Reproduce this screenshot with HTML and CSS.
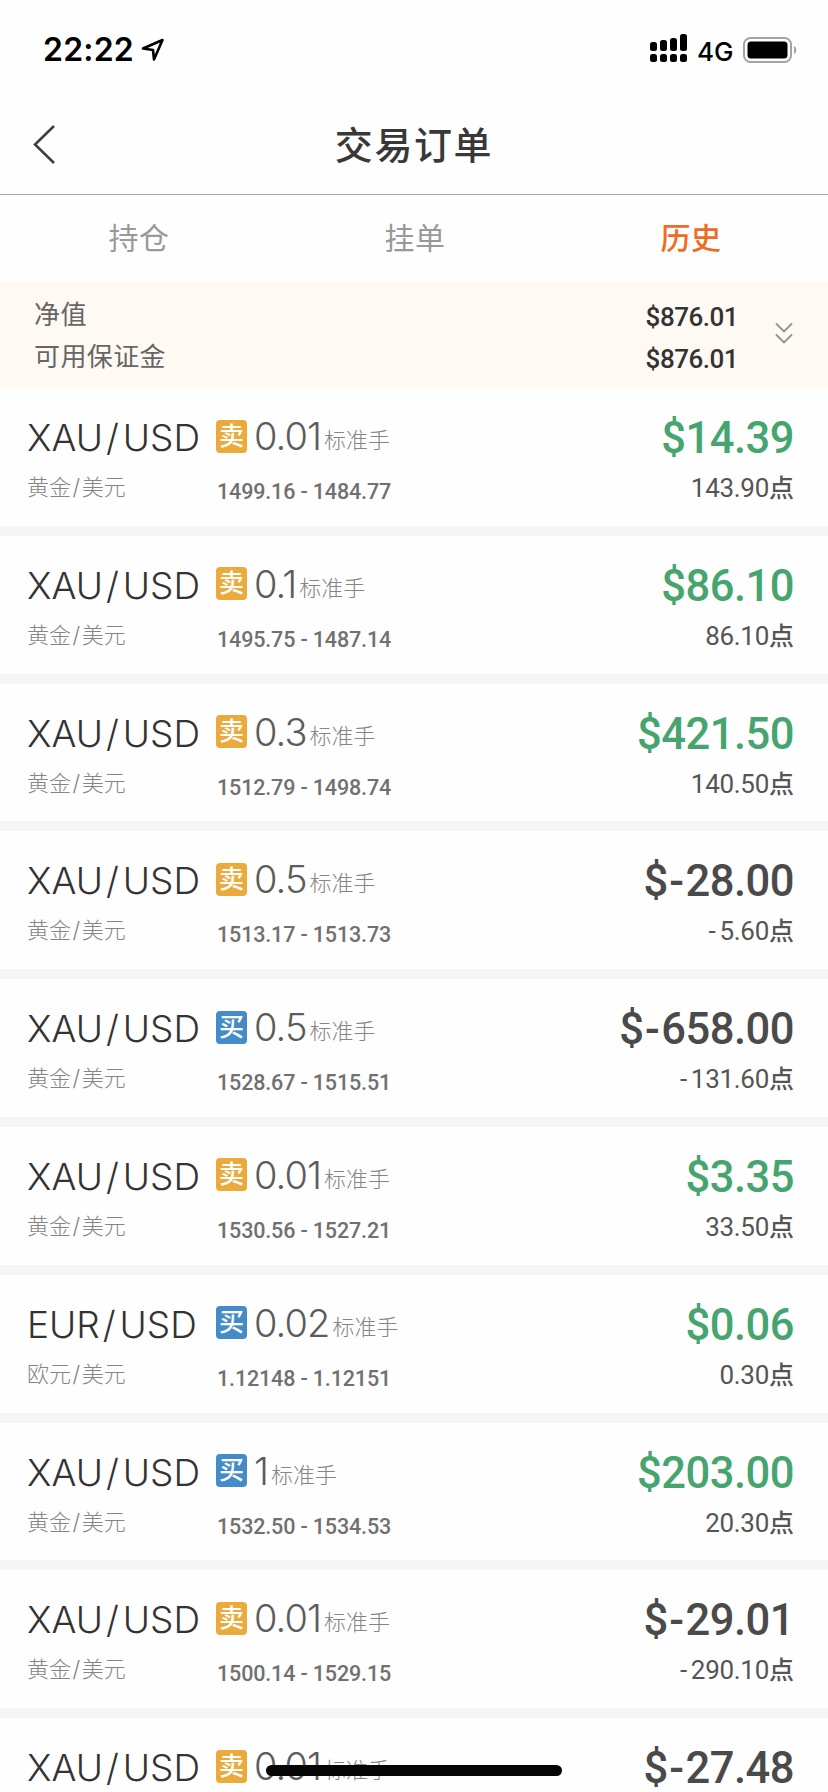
FILE: index.html
```html
<!DOCTYPE html>
<html lang="zh-CN">
<head>
<meta charset="utf-8">
<title>交易订单</title>
<link rel="stylesheet" href="styles.css">
</head>
<body>
<div class="screen">
  <div class="status">
    <span class="clock">22:22</span>
    <svg class="locate" width="24" height="24" viewBox="0 0 24 24"><path d="M2 10.5 21.5 2 13 21.5 12 12z" fill="none" stroke="#000" stroke-width="2.6" stroke-linejoin="round"/></svg>
    <svg class="signal" width="38" height="30" viewBox="0 0 38 30"><g><rect x="0" y="9" width="7" height="9" rx="2.5"/><rect x="10" y="7" width="7" height="11" rx="2.5"/><rect x="20" y="5" width="7" height="13" rx="2.5"/><rect x="30" y="1" width="7" height="17" rx="2.5"/><rect x="0" y="21" width="7" height="8" rx="2.5"/><rect x="10" y="21" width="7" height="8" rx="2.5"/><rect x="20" y="21" width="7" height="8" rx="2.5"/><rect x="30" y="21" width="7" height="8" rx="2.5"/></g></svg>
    <span class="network">4G</span>
    <svg class="battery" width="54" height="26" viewBox="0 0 54 26"><rect x="1" y="1" width="47" height="24" rx="6.5" fill="none" stroke="#a3a3a3" stroke-width="2"/><rect x="4.500" y="4.500" width="40" height="17" rx="3.500"/><path d="M51 9c3 1 3 7 0 8z" fill="#a3a3a3"/></svg>
  </div>
  <header class="nav">
    <svg class="back" width="24" height="42" viewBox="0 0 24 42"><path d="M21 3 2 21.500 21 40" fill="none" stroke="#3c3c3c" stroke-width="2.500"/></svg>
    <h1 class="title">交易订单</h1>
  </header>
  <nav class="tabs">
    <span class="tab">持仓</span><span class="tab">挂单</span><span class="tab active">历史</span>
  </nav>
  <section class="summary">
    <div class="labels"><span>净值</span><span>可用保证金</span></div>
    <div class="balances"><span>$876.01</span><span>$876.01</span></div>
    <svg class="expand" width="18" height="22" viewBox="0 0 18 22"><path d="M1 1.500 9 9.500 17 1.500M1 12.500 9 20.500 17 12.500" fill="none" stroke="#929292" stroke-width="1.800"/></svg>
  </section>
  <main class="orders">
    <article class="order">
      <div class="pair"><span class="symbol">XAU<u>/</u>USD</span><span class="alias">黄金<u>/</u>美元</span></div>
      <div class="deal"><div class="lot"><i class="side sell">卖</i><span class="size">0.01</span><span class="unit">标准手</span></div><span class="range">1499.16 - 1484.77</span></div>
      <div class="result"><span class="amount gain">$14.39</span><span class="points">143.90<b>点</b></span></div>
    </article>
    <article class="order">
      <div class="pair"><span class="symbol">XAU<u>/</u>USD</span><span class="alias">黄金<u>/</u>美元</span></div>
      <div class="deal"><div class="lot"><i class="side sell">卖</i><span class="size">0.1</span><span class="unit">标准手</span></div><span class="range">1495.75 - 1487.14</span></div>
      <div class="result"><span class="amount gain">$86.10</span><span class="points">86.10<b>点</b></span></div>
    </article>
    <article class="order">
      <div class="pair"><span class="symbol">XAU<u>/</u>USD</span><span class="alias">黄金<u>/</u>美元</span></div>
      <div class="deal"><div class="lot"><i class="side sell">卖</i><span class="size">0.3</span><span class="unit">标准手</span></div><span class="range">1512.79 - 1498.74</span></div>
      <div class="result"><span class="amount gain">$421.50</span><span class="points">140.50<b>点</b></span></div>
    </article>
    <article class="order">
      <div class="pair"><span class="symbol">XAU<u>/</u>USD</span><span class="alias">黄金<u>/</u>美元</span></div>
      <div class="deal"><div class="lot"><i class="side sell">卖</i><span class="size">0.5</span><span class="unit">标准手</span></div><span class="range">1513.17 - 1513.73</span></div>
      <div class="result"><span class="amount">$<s>-</s>28.00</span><span class="points"><s>-</s>5.60<b>点</b></span></div>
    </article>
    <article class="order">
      <div class="pair"><span class="symbol">XAU<u>/</u>USD</span><span class="alias">黄金<u>/</u>美元</span></div>
      <div class="deal"><div class="lot"><i class="side buy">买</i><span class="size">0.5</span><span class="unit">标准手</span></div><span class="range">1528.67 - 1515.51</span></div>
      <div class="result"><span class="amount">$<s>-</s>658.00</span><span class="points"><s>-</s>131.60<b>点</b></span></div>
    </article>
    <article class="order">
      <div class="pair"><span class="symbol">XAU<u>/</u>USD</span><span class="alias">黄金<u>/</u>美元</span></div>
      <div class="deal"><div class="lot"><i class="side sell">卖</i><span class="size">0.01</span><span class="unit">标准手</span></div><span class="range">1530.56 - 1527.21</span></div>
      <div class="result"><span class="amount gain">$3.35</span><span class="points">33.50<b>点</b></span></div>
    </article>
    <article class="order">
      <div class="pair"><span class="symbol">EUR<u>/</u>USD</span><span class="alias">欧元<u>/</u>美元</span></div>
      <div class="deal"><div class="lot"><i class="side buy">买</i><span class="size">0.02</span><span class="unit">标准手</span></div><span class="range">1.12148 - 1.12151</span></div>
      <div class="result"><span class="amount gain">$0.06</span><span class="points">0.30<b>点</b></span></div>
    </article>
    <article class="order">
      <div class="pair"><span class="symbol">XAU<u>/</u>USD</span><span class="alias">黄金<u>/</u>美元</span></div>
      <div class="deal"><div class="lot"><i class="side buy">买</i><span class="size">1</span><span class="unit">标准手</span></div><span class="range">1532.50 - 1534.53</span></div>
      <div class="result"><span class="amount gain">$203.00</span><span class="points">20.30<b>点</b></span></div>
    </article>
    <article class="order">
      <div class="pair"><span class="symbol">XAU<u>/</u>USD</span><span class="alias">黄金<u>/</u>美元</span></div>
      <div class="deal"><div class="lot"><i class="side sell">卖</i><span class="size">0.01</span><span class="unit">标准手</span></div><span class="range">1500.14 - 1529.15</span></div>
      <div class="result"><span class="amount">$<s>-</s>29.01</span><span class="points"><s>-</s>290.10<b>点</b></span></div>
    </article>
    <article class="order">
      <div class="pair"><span class="symbol">XAU<u>/</u>USD</span></div>
      <div class="deal"><div class="lot"><i class="side sell">卖</i><span class="size">0.01</span><span class="unit">标准手</span></div></div>
      <div class="result"><span class="amount">$<s>-</s>27.48</span></div>
    </article>
  </main>
  <div class="home-bar"></div>
</div>
</body>
</html>
```
FILE: styles.css
```css
* { box-sizing: border-box; }
body { margin: 0; background: #fefefe; }
u, s { text-decoration: none; }
.screen {
  position: relative;
  display: flex;
  flex-direction: column;
  width: 828px;
  height: 1792px;
  overflow: hidden;
  background: #fefefe;
  color: #333;
  font-family: Inter, "Noto Sans CJK SC", sans-serif;
}
.status { display: flex; align-items: center; height: 100px; padding: 0 31px 0 43px; flex: none; }
.clock { width: 91px; font-size: 32px; line-height: 40px; font-weight: 600; letter-spacing: .200px; color: #000; white-space: nowrap; }
.locate { margin-left: 7px; }
.signal { margin-left: auto; margin-top: -4px; }
.network { width: 36px; margin: 3px 10px 0 9px; font-size: 26px; font-weight: 500; line-height: 32px; color: #000; white-space: nowrap; }
.nav { display: flex; align-items: center; flex: none; height: 95px; padding-left: 33px; border-bottom: 1px solid #aaa; }
.back { flex: none; margin-top: -7px; }
.title { flex: 1; margin: -4px 57px 0 0; text-align: center; font-size: 38px; line-height: 50px; font-weight: 500; letter-spacing: 1.600px; color: #383838; }
.tabs { display: flex; flex: none; height: 87px; }
.tab { flex: 1; padding-left: 2px; text-align: center; font-size: 30px; line-height: 86px; letter-spacing: .600px; color: #999; font-weight: 400; }
.tab.active { color: #ee6d25; font-weight: 500; }
.summary { display: flex; align-items: center; flex: none; height: 106px; padding: 0 35px 0 34px; background: #fef9f2; }
.labels, .balances { display: flex; flex-direction: column; font-size: 26px; line-height: 42px; }
.labels { flex: 1; letter-spacing: .400px; color: #666; margin-top: 2px; }
.balances { margin: 5px 37px 0 0; font-family: Roboto, sans-serif; font-weight: 500; letter-spacing: -.500px; color: #333; }
.expand { margin-top: -4px; }
.orders { flex: none; }
.order { display: flex; height: 147.800px; border-bottom: 10.700px solid #f5f5f5; padding: 0 34px 0 27px; }
.pair, .deal, .result { display: flex; flex-direction: column; white-space: nowrap; }
.pair { width: 189px; padding-top: 26px; }
.symbol { font-size: 37px; font-weight: 300; line-height: 48px; }
.symbol u { margin: 0 4px 0 3px; }
.alias { margin-top: 10px; font-size: 22px; line-height: 30px; font-weight: 300; color: #858585; }
.alias u { margin: 0 1.500px; }
.deal { flex: 1; padding-top: 24px; }
.lot { display: flex; align-items: center; height: 48px; }
.side { width: 31px; height: 33px; border-radius: 4px; color: #fff; font-size: 25px; line-height: 32px; font-style: normal; font-weight: 500; text-align: center; }
.sell { background: #ebab3c; }
.buy { background: #448bc9; }
.size { margin-left: 7px; font-size: 38px; font-weight: 300; line-height: 48px; letter-spacing: -.900px; color: #5c5c5c; }
.unit { margin: 8px 0 0 3px; font-size: 22px; line-height: 30px; font-weight: 300; color: #858585; }
.range { margin: 18px 0 0 1px; font-family: Roboto, sans-serif; font-size: 21.500px; line-height: 28px; font-weight: 500; letter-spacing: -.150px; color: #707070; }
.result { align-items: flex-end; padding-top: 27px; font-family: Roboto, "Noto Sans CJK SC", sans-serif; }
.amount { font-size: 43.500px; line-height: 48px; font-weight: 500; letter-spacing: -.500px; color: #4a4a4a; }
.amount s { margin: 0 2px 0 1.500px; }
.amount.gain { color: #46a56f; }
.points { margin-top: 10px; font-size: 26px; line-height: 30px; letter-spacing: -.300px; color: #555; }
.points s { margin-right: 4px; }
.points b { font-size: 25px; font-weight: 500; letter-spacing: 0; }
.home-bar { position: absolute; left: 266px; top: 1765px; width: 296px; height: 11px; border-radius: 6px; background: #050505; }
```
